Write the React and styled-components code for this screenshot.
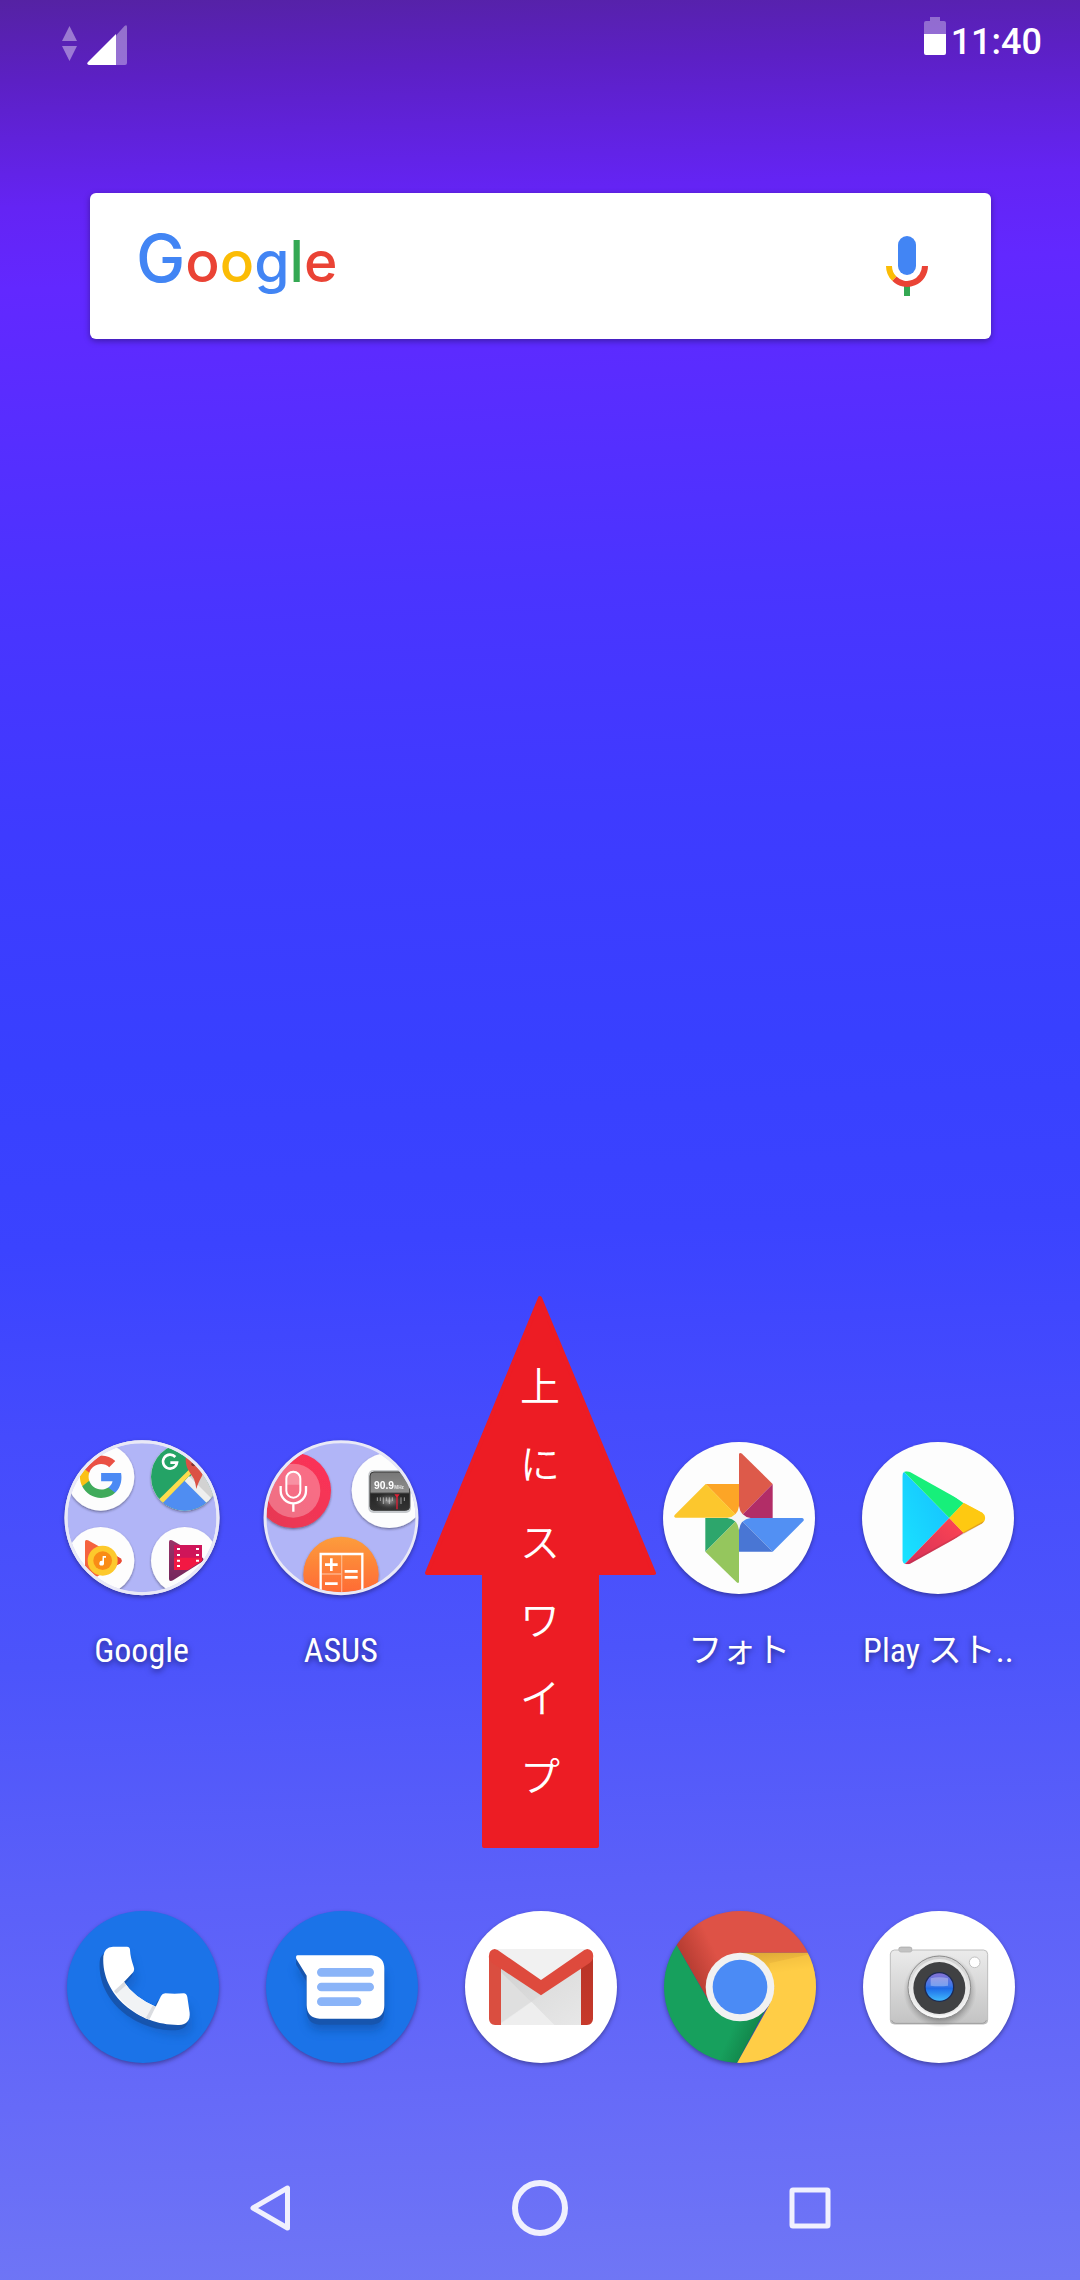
import React from "react";
import styled, { createGlobalStyle } from "styled-components";

const GlobalStyle = createGlobalStyle`
  *, *::before, *::after { box-sizing: border-box; }
  body {
    margin: 0;
    font-family: Roboto, "Noto Sans CJK JP", sans-serif;
    color: #fff;
  }
`;

const Screen = styled.main`
  display: flex;
  flex-direction: column;
  min-height: 100vh;
  background: linear-gradient(
    178deg,
    #5522a3 0%,
    #5c20c4 3.5%,
    #6022da 6%,
    #6424f4 9%,
    #6228ff 12.5%,
    #582dff 18%,
    #4a34ff 26%,
    #3e3bff 36%,
    #3840ff 46%,
    #3b43ff 54%,
    #454bfd 62%,
    #4c54fb 72%,
    #5b60f9 82%,
    #666af8 91%,
    #7077f5 100%
  );
`;

const StatusBar = styled.header`
  display: flex;
  align-items: flex-start;
  justify-content: space-between;
  height: 72px;
  padding: 17px 38px 0 62px;
`;

const StatusGroup = styled.div`
  display: flex;
  align-items: flex-start;
  gap: ${(p) => p.$gap}px;
  padding-top: ${(p) => p.$top || 0}px;
`;

const Clock = styled.time`
  font-size: 36px;
  font-weight: 500;
  line-height: 50px;
`;

const SearchBar = styled.section`
  display: flex;
  align-items: center;
  justify-content: space-between;
  height: 146px;
  margin: 121px 89px 0 90px;
  padding: 0 55px 0 46px;
  border-radius: 6px;
  background: #fff;
  box-shadow: 0 2px 6px rgba(0, 0, 0, 0.35);
`;

const PlainButton = styled.button`
  display: flex;
  align-items: center;
  justify-content: center;
  padding: 0;
  border: 0;
  background: none;
  color: inherit;
  font: inherit;
  cursor: pointer;
`;

const LogoButton = styled(PlainButton)`
  align-items: baseline;
  padding-bottom: 12px;
  font-family: Inter, sans-serif;
  font-weight: 500;
  line-height: 72px;
`;

const Letter = styled.span`
  color: ${(p) => p.$color};
  font-size: ${(p) => (p.$capital ? 66 : 57)}px;
`;

const MicButton = styled(PlainButton)`
  width: 58px;
  height: 72px;
`;

const IconGrid = styled.section`
  display: grid;
  grid-template-columns: repeat(5, 1fr);
  padding: 0 41px 0 43px;
`;

const HomeRow = styled(IconGrid)`
  margin-top: auto;
  padding: 0 42px;
`;

const Dock = styled(IconGrid)`
  margin: 237px 0 73px;
`;

const AppButton = styled(PlainButton)`
  flex-direction: column;
  justify-content: flex-start;
  gap: 31px;
`;

const IconBox = styled.span`
  display: flex;
  align-items: center;
  justify-content: center;
  height: ${(p) => (p.$dock ? 152 : 155)}px;

  svg {
    overflow: visible;
    filter: drop-shadow(0 2px 2px rgba(20, 20, 60, 0.45));
  }
`;

const Label = styled.span`
  font-family: "Roboto Condensed", "Liberation Sans Narrow", Roboto, "Noto Sans CJK JP", sans-serif;
  font-size: 34px;
  line-height: 48px;
  white-space: nowrap;
  text-shadow: 0 2px 6px rgba(0, 0, 40, 0.6);
`;

const ArrowSlot = styled.div`
  position: relative;
`;

const SwipeHint = styled.div`
  position: absolute;
  top: -145px;
  left: 50%;
  width: 232px;
  height: 554px;
  padding-top: 50px;
  transform: translateX(-50%);
  display: flex;
  justify-content: center;
`;

const ArrowShape = styled.svg`
  position: absolute;
  inset: 0;
`;

const HintText = styled.p`
  position: relative;
  width: 40px;
  margin: 0;
  font-family: "Noto Sans CJK JP", sans-serif;
  font-size: 40px;
  font-weight: 350;
  line-height: 78px;
  text-align: center;
  word-break: break-all;
  line-break: anywhere;
`;

const NavBar = styled.nav`
  display: grid;
  grid-template-columns: repeat(3, 1fr);
  height: 144px;
  padding: 0 12.5%;
`;

function SignalIcon() {
  return (
    <svg width="66" height="40" viewBox="0 0 66 40" aria-label="電波">
      <path d="M0 16 7.500 1 15 16ZM0 21h15L7.500 36Z" fill="#fff" opacity=".4" />
      <path d="M54 10.500 62.500 1Q65 -1 65 2V38Q65 40 63 40H54Z" fill="#fff" opacity=".36" />
      <path d="M54 9V40H27Q24 39 26 37Z" fill="#fff" />
    </svg>
  );
}

function BatteryIcon() {
  return (
    <svg width="22" height="38" viewBox="0 0 22 38" aria-label="電池">
      <path d="M6 0H16V4H20Q22 4 22 6V17H0V6Q0 4 2 4H6Z" fill="#fff" opacity=".34" />
      <path d="M0 17H22V36Q22 38 20 38H2Q0 38 0 36Z" fill="#fff" />
    </svg>
  );
}

function MicIcon() {
  return (
    <svg width="42" height="60" viewBox="0 0 42 60" aria-hidden="true">
      <rect x="12" y="0" width="18" height="39" rx="9" fill="#4285f4" />
      <path d="M18 50h6v10h-6z" fill="#34a853" />
      <path d="M39 30A18 18 0 0 1 8.300 42.700" fill="none" stroke="#ea4335" strokeWidth="6" />
      <path d="M3 30A18 18 0 0 0 8.300 42.700" fill="none" stroke="#fbbc05" strokeWidth="6" />
    </svg>
  );
}

function GoogleFolder() {
  return (
    <svg width="156" height="156" viewBox="72 57 468 468" aria-hidden="true">
      <defs>
        <clipPath id="gFolder"><circle cx="306" cy="290" r="224" /></clipPath>
        <clipPath id="gMaps"><circle cx="434" cy="168" r="101" /></clipPath>
        <linearGradient id="gPlum" x1="0" y1="0" x2="0" y2="1">
          <stop offset="0" stopColor="#9a3468" /><stop offset="1" stopColor="#74265c" />
        </linearGradient>
        <filter id="gShade" x="-10%" y="-10%" width="120%" height="125%">
          <feDropShadow dx="0" dy="4" stdDeviation="3" floodColor="#223" floodOpacity=".5" />
        </filter>
      </defs>
      <circle cx="306" cy="290" r="228" fill="#b1b5f7" stroke="#e9e9f7" strokeWidth="9" />
      <g clipPath="url(#gFolder)">
        <g fill="#fdfdfd" filter="url(#gShade)">
          <circle cx="182" cy="168" r="101" />
          <circle cx="434" cy="168" r="101" />
          <circle cx="182" cy="419" r="101" />
          <circle cx="434" cy="419" r="101" />
        </g>
        <g transform="translate(114 98) scale(5.780)">
          <path fill="#4b8af4" d="M22.560 12.250c0-.780-.070-1.530-.200-2.250H12v4.260h5.920c-.260 1.370-1.040 2.530-2.210 3.310v2.770h3.570c2.080-1.920 3.280-4.740 3.280-8.090z" />
          <path fill="#40ab5b" d="M12 23c2.970 0 5.460-.980 7.280-2.660l-3.570-2.770c-.980.660-2.230 1.060-3.710 1.060-2.860 0-5.290-1.930-6.160-4.530H2.180v2.840C3.990 20.530 7.700 23 12 23z" />
          <path fill="#fbc116" d="M5.840 14.090c-.220-.660-.350-1.360-.350-2.090s.130-1.430.350-2.090V7.070H2.180C1.430 8.550 1 10.220 1 12s.430 3.450 1.180 4.930l3.660-2.840z" />
          <path fill="#ea5044" d="M12 5.380c1.620 0 3.060.560 4.210 1.640l3.150-3.150C17.450 2.090 14.970 1 12 1 7.700 1 3.990 3.470 2.180 7.070l3.660 2.840c.870-2.600 3.300-4.530 6.160-4.530z" />
        </g>
        <g clipPath="url(#gMaps)">
          <path d="M333 67H535V269H333Z" fill="#24a366" />
          <path d="M434 182 535 83V269Z" fill="#d2d2d2" />
          <path d="M434 178 530 274H338Z" fill="#4f8df2" />
          <path d="M447 165 540 258 520 266 434 180Z" fill="#efefef" />
          <path d="M340 252 455 138 458 154 356 259 340 272Z" fill="#fddc4d" />
          <path d="M437 112Q436 136 449 154L462 174Q467 188 469 204Q473 188 486 165L491 150 460 103Z" fill="#db5145" />
          <circle cx="460" cy="130" r="6" fill="#84332e" />
          <path d="M406 108A21 21 0 1 0 411 125H391" fill="none" stroke="#fff" strokeWidth="8" />
        </g>
        <path d="M135 362Q135 354 144 358L241 412Q249 419 241 427L173 466Q168 468 164 463L135 440Z" fill="#f5633f" />
        <path d="M215 397 241 412Q249 419 241 427L217 440Z" fill="#e84b35" />
        <circle cx="188" cy="419" r="45" fill="#fdc92c" />
        <circle cx="188" cy="419" r="28" fill="#f98c16" />
        <path d="M188 405H198V410H192V426A7 7 0 1 1 187 420Z" fill="#fff" />
        <path d="M387 363Q387 354 396 358L489 411Q493 416 489 421L399 478Q387 483 387 474Z" fill="url(#gPlum)" />
        <path d="M402 372H486V411H402Z" fill="#cf1559" />
        <path d="M402 410H486V420L444 447H402Z" fill="#f21843" />
        <path d="M411 381h9v6h-9zM411 399h9v6h-9zM411 416h9v6h-9zM411 432h9v6h-9zM468 381h9v6h-9zM468 399h9v6h-9zM468 416h9v6h-9z" fill="#fff" />
      </g>
      <circle cx="306" cy="290" r="228" fill="none" stroke="#e9e9f7" strokeWidth="9" />
    </svg>
  );
}

function AsusFolder() {
  return (
    <svg width="156" height="156" viewBox="70 57 468 468" aria-hidden="true">
      <defs>
        <clipPath id="aFolder"><circle cx="304" cy="290" r="224" /></clipPath>
        <linearGradient id="aRed" x1="0" y1="1" x2="1" y2="0">
          <stop offset="0" stopColor="#e33b52" /><stop offset="1" stopColor="#ff3159" />
        </linearGradient>
        <linearGradient id="aOrange" x1="0" y1="0" x2="0" y2="1">
          <stop offset="0" stopColor="#fc9d3c" /><stop offset=".75" stopColor="#ff6a35" />
        </linearGradient>
        <linearGradient id="aMetal" x1="0" y1="0" x2="0" y2="1">
          <stop offset="0" stopColor="#777" /><stop offset=".52" stopColor="#8d8d8d" />
          <stop offset=".57" stopColor="#262626" /><stop offset="1" stopColor="#333" />
        </linearGradient>
        <radialGradient id="aDial">
          <stop offset="0" stopColor="#aaa" /><stop offset="1" stopColor="#333" stopOpacity="0" />
        </radialGradient>
        <filter id="aShade" x="-10%" y="-10%" width="120%" height="125%">
          <feDropShadow dx="0" dy="4" stdDeviation="3" floodColor="#223" floodOpacity=".5" />
        </filter>
      </defs>
      <circle cx="304" cy="290" r="228" fill="#b1b5f7" />
      <g clipPath="url(#aFolder)">
        <g filter="url(#aShade)">
          <circle cx="161" cy="208" r="113" fill="url(#aRed)" />
          <circle cx="449" cy="208" r="113" fill="#fdfdfd" />
          <circle cx="304" cy="460" r="113" fill="url(#aOrange)" />
        </g>
        <circle cx="161" cy="209" r="81" fill="#fff" opacity=".28" />
        <path d="M139 191V171A22 22 0 0 1 183 171V191Z" fill="#fff" opacity=".25" />
        <g fill="none" stroke="#fff" strokeWidth="6">
          <rect x="140" y="152" width="42" height="78" rx="21" />
          <path d="M123 195V209A38 38 0 0 0 199 209V195M161 247V272" strokeWidth="7" />
        </g>
        <rect x="386" y="147" width="128" height="129" rx="15" fill="#c6c9cc" />
        <rect x="391" y="153" width="119" height="115" rx="12" fill="url(#aMetal)" stroke="#3a3a3a" strokeWidth="3" />
        <ellipse cx="448" cy="240" rx="46" ry="27" fill="url(#aDial)" />
        <path d="M413 229V240M422 229V240M431 229V249M440 229V240M449 229V249M458 229V240M484 229V249M494 229V240" stroke="#d6d6d6" strokeWidth="2" />
        <path d="M464 220H480L474 228V265H470V228Z" fill="#e01f37" />
        <text x="403" y="204" fill="#fff" fontFamily="Liberation Sans, sans-serif" fontWeight="700" fontSize="31">90.9</text>
        <text x="464" y="204" fill="#e6e6e6" fontFamily="Liberation Sans, sans-serif" fontWeight="700" fontSize="14">MHz</text>
        <g fill="none" stroke="#fff">
          <path d="M243 540V399H368V540" strokeWidth="7" />
          <path d="M306 402V540M246 459H306" strokeWidth="4" opacity=".4" />
          <path d="M256 431H294M275 412V450M256 488H294M315 451H354M315 469H354" strokeWidth="8" />
        </g>
      </g>
      <circle cx="304" cy="290" r="228" fill="none" stroke="#e9e9f7" strokeWidth="9" />
    </svg>
  );
}

function PhotosIcon() {
  return (
    <svg width="152" height="152" viewBox="72 66 456 456" aria-hidden="true">
      <circle cx="300" cy="294" r="228" fill="#fdfdfd" />
      <path d="M300 192V294L200 192Z" fill="#fda526" />
      <path d="M200 192 300 293H110Q103 291 107 285Z" fill="#fcc72d" />
      <path d="M300 294V102Q302 97 309 101L401 192Z" fill="#dd5a4a" />
      <path d="M401 192V294H300Z" fill="#b22d67" />
      <path d="M300 294H490Q497 297 493 303L401 395Z" fill="#5290f3" />
      <path d="M300 294 401 395H300Z" fill="#4976d4" />
      <path d="M199 294H300L199 395Z" fill="#2da66c" />
      <path d="M300 294V486Q298 491 293 487L199 395Z" fill="#95c65d" />
      <path d="M300 258Q304 289 335 294Q304 298 300 330Q296 298 265 294Q296 289 300 258Z" fill="#f4f4f4" />
    </svg>
  );
}

function PlayIcon() {
  return (
    <svg width="152" height="152" viewBox="669 66 456 456" aria-hidden="true">
      <defs>
        <clipPath id="playShape">
          <path d="M790 168Q791 149 813 156L1029 277Q1049 294 1029 311L813 431Q793 437 790 421Z" />
        </clipPath>
        <linearGradient id="playBlue" x1="1" y1="0" x2="0" y2="1">
          <stop offset="0" stopColor="#16bdff" /><stop offset="1" stopColor="#1ae6ff" />
        </linearGradient>
        <linearGradient id="playRed" x1="1" y1="0" x2="0" y2="1">
          <stop offset="0" stopColor="#ff4653" /><stop offset="1" stopColor="#cf2c59" />
        </linearGradient>
      </defs>
      <circle cx="897" cy="294" r="228" fill="#fdfdfd" />
      <g clipPath="url(#playShape)">
        <path d="M780 140V450L931 294Z" fill="url(#playBlue)" />
        <path d="M780 140 931 294 974 250 810 130Z" fill="#17ef7a" />
        <path d="M780 450 931 294 974 338 810 455Z" fill="url(#playRed)" />
        <path d="M974 248 1060 294 974 340 931 294Z" fill="#fec911" />
        <path d="M800 437 1035 307" stroke="#8b3044" strokeOpacity=".25" strokeWidth="8" />
      </g>
    </svg>
  );
}

function PhoneIcon() {
  const handset =
    "M218 170H260Q269 171 269 180Q270 202 280 230Q284 240 277 248L251 276Q281 322 346 350L362 318Q366 310 375 310Q403 312 430 310Q439 311 441 321L448 368Q451 402 416 405C300 407 182 320 189 199Q191 172 218 170Z";
  return (
    <svg width="152" height="152" viewBox="80 63 456 456" aria-hidden="true">
      <defs>
        <filter id="phoneBlur" x="-20%" y="-20%" width="150%" height="150%">
          <feGaussianBlur stdDeviation="14" />
        </filter>
      </defs>
      <circle cx="308" cy="291" r="228" fill="#1b73e8" />
      <path d={handset} fill="#0d4a9c" opacity=".35" transform="translate(8 32)" filter="url(#phoneBlur)" />
      <path d={handset} fill="#1755ae" transform="translate(-11 16)" />
      <path d={handset} fill="#1755ae" transform="translate(-5 14)" />
      <path d={handset} fill="#fff" />
      <path d="M251 276Q281 322 346 350L319 387Q259 357 221 304Z" fill="#f1f3f5" />
      <path d="M251 276 257 286 228 311 221 303ZM337 347 346 350 327 389 316 385Z" fill="#dadce0" />
    </svg>
  );
}

function MessagesIcon() {
  const bubble = "M772 196H994Q1032 199 1032 237V346Q1032 384 994 386H838Q800 384 799 346V257L768 207Q765 197 772 196Z";
  return (
    <svg width="152" height="152" viewBox="677 63 456 456" aria-hidden="true">
      <defs>
        <filter id="msgBlur" x="-20%" y="-20%" width="150%" height="150%">
          <feGaussianBlur stdDeviation="14" />
        </filter>
      </defs>
      <circle cx="905" cy="291" r="228" fill="#1b73e8" />
      <path d={bubble} fill="#0d4a9c" opacity=".5" transform="translate(2 36)" filter="url(#msgBlur)" />
      <path d={bubble} fill="#1755ae" transform="translate(0 18)" />
      <path d={bubble} fill="#1755ae" transform="translate(0 9)" />
      <path d={bubble} fill="#fff" />
      <path d="M843 247H988M843 291H988M843 335H950" stroke="#8ab4f8" strokeWidth="26" strokeLinecap="round" />
    </svg>
  );
}

function GmailIcon() {
  return (
    <svg width="152" height="152" viewBox="75 63 456 456" aria-hidden="true">
      <defs>
        <linearGradient id="gmRight" x1="0" y1="0" x2="0" y2="1">
          <stop offset="0" stopColor="#b83427" /><stop offset="1" stopColor="#c7392b" />
        </linearGradient>
        <linearGradient id="gmShade" x1="0" y1="0" x2="1" y2="1">
          <stop offset="0" stopColor="#c8c8c8" /><stop offset="1" stopColor="#e6e6e6" />
        </linearGradient>
      </defs>
      <circle cx="303" cy="291" r="228" fill="#fff" />
      <path d="M163 177H442L424 405H182Z" fill="#e9e9e9" />
      <path d="M163 177H442L303 272Z" fill="#f1f1f1" />
      <path d="M182 232 303 315 182 399Z" fill="#dfdfdf" />
      <path d="M182 232 303 315 424 232V405H343L182 245Z" fill="url(#gmShade)" opacity=".55" />
      <path d="M182 402 275 336 343 405H182Z" fill="#eee" />
      <path d="M147 200 183 232V405H165Q148 404 147 387Z" fill="#da4e40" />
      <path d="M459 200 423 232V405H441Q458 404 459 387Z" fill="url(#gmRight)" />
      <path d="M147 205Q144 180 164 177L173 180 303 270 433 180 442 177Q463 180 459 205Q458 212 449 219L303 316 157 219Q147 211 147 205Z" fill="#de4a3d" />
    </svg>
  );
}

function ChromeIcon() {
  return (
    <svg width="152" height="152" viewBox="72 63 456 456" aria-hidden="true">
      <defs>
        <clipPath id="chromeDisc"><circle cx="300" cy="291" r="228" /></clipPath>
        <linearGradient id="crRed" gradientUnits="userSpaceOnUse" x1="140" y1="250" x2="235" y2="205">
          <stop offset="0" stopColor="#b23a30" /><stop offset="1" stopColor="#de5246" />
        </linearGradient>
        <linearGradient id="crGreen" gradientUnits="userSpaceOnUse" x1="365" y1="460" x2="275" y2="420">
          <stop offset="0" stopColor="#107a42" /><stop offset="1" stopColor="#17a05d" />
        </linearGradient>
        <linearGradient id="crGold" gradientUnits="userSpaceOnUse" x1="400" y1="187" x2="408" y2="250">
          <stop offset="0" stopColor="#e0ab38" /><stop offset="1" stopColor="#ffcd46" />
        </linearGradient>
      </defs>
      <g clipPath="url(#chromeDisc)">
        <path d="M72 63H528V188H300L208 335 110 166Z" fill="url(#crRed)" />
        <path d="M110 166 210 340 300 291 380 352 288 525H60V100Z" fill="url(#crGreen)" />
        <path d="M300 188H540V525H288L388 345 403 291Z" fill="url(#crGold)" />
        <path d="M388 220 528 188V300H400Z" fill="#ffcd46" opacity=".5" />
      </g>
      <circle cx="300" cy="291" r="103" fill="#f1f1f1" />
      <circle cx="300" cy="291" r="82" fill="#4b8bf5" />
    </svg>
  );
}

function CameraIcon() {
  return (
    <svg width="152" height="152" viewBox="669 63 456 456" aria-hidden="true">
      <defs>
        <linearGradient id="camBody" x1="0" y1="0" x2="0" y2="1">
          <stop offset="0" stopColor="#ebebeb" /><stop offset="1" stopColor="#c3c3c3" />
        </linearGradient>
        <linearGradient id="camRing" x1="0" y1="0" x2="0" y2="1">
          <stop offset="0" stopColor="#cfcfcf" /><stop offset="1" stopColor="#fafafa" />
        </linearGradient>
        <linearGradient id="camLens" x1="0" y1="0" x2="0" y2="1">
          <stop offset="0" stopColor="#8673d6" /><stop offset=".45" stopColor="#3f77e8" />
          <stop offset=".55" stopColor="#1f6be8" /><stop offset="1" stopColor="#3fb8fb" />
        </linearGradient>
        <radialGradient id="camShadow">
          <stop offset=".75" stopColor="#555" stopOpacity=".55" /><stop offset="1" stopColor="#888" stopOpacity="0" />
        </radialGradient>
      </defs>
      <circle cx="897" cy="291" r="228" fill="#fff" />
      <rect x="776" y="171" width="40" height="16" rx="7" fill="#c2c2c2" stroke="#a2a2a2" strokeWidth="2" />
      <path d="M763 180H775L781 186H812L818 180H1031Q1043 181 1043 193V390Q1043 402 1031 402H763Q751 402 751 390V192Q752 181 763 180Z" fill="url(#camBody)" stroke="#bdbdbd" strokeWidth="3" />
      <path d="M755 391Q757 400 767 400H1028Q1037 399 1039 391" fill="none" stroke="#9e9e9e" strokeWidth="3" />
      <circle cx="900" cy="302" r="110" fill="url(#camShadow)" />
      <circle cx="898" cy="292" r="94" fill="url(#camRing)" stroke="#8d8d8d" strokeWidth="3" />
      <circle cx="898" cy="292" r="85" fill="#e9e9e9" />
      <circle cx="898" cy="294" r="78" fill="#404143" />
      <circle cx="898" cy="291" r="45" fill="#1c2a55" />
      <circle cx="898" cy="291" r="41" fill="url(#camLens)" />
      <path d="M872 265Q897 258 924 265V287Q897 291 872 287Z" fill="#fff" opacity=".3" />
      <circle cx="1004" cy="217" r="16" fill="#fff" stroke="#c2c2c2" strokeWidth="3" />
    </svg>
  );
}

const wordmark = [
  ["G", "#4285f4"],
  ["o", "#ea4335"],
  ["o", "#fbbc05"],
  ["g", "#4285f4"],
  ["l", "#34a853"],
  ["e", "#ea4335"],
];

function AppIcon({ icon, label, name, dock }) {
  return (
    <AppButton type="button" aria-label={name}>
      <IconBox $dock={dock}>{icon}</IconBox>
      {label && <Label>{label}</Label>}
    </AppButton>
  );
}

export default function App() {
  return (
    <>
      <GlobalStyle />
      <Screen>
        <StatusBar>
          <StatusGroup $gap={0} $top={8}>
            <SignalIcon />
          </StatusGroup>
          <StatusGroup $gap={5}>
            <BatteryIcon />
            <Clock>11:40</Clock>
          </StatusGroup>
        </StatusBar>

        <SearchBar>
          <LogoButton type="button">
            {wordmark.map(([char, color], i) => (
              <Letter key={i} $color={color} $capital={i === 0}>{char}</Letter>
            ))}
          </LogoButton>
          <MicButton type="button" aria-label="音声検索">
            <MicIcon />
          </MicButton>
        </SearchBar>

        <HomeRow>
          <AppIcon icon={<GoogleFolder />} label="Google" />
          <AppIcon icon={<AsusFolder />} label="ASUS" />
          <ArrowSlot>
            <SwipeHint>
              <ArrowShape width="232" height="554" viewBox="0 0 232 554" aria-hidden="true">
                <path
                  d="M116 3 230 278H173V551H60V278H3Z"
                  fill="#ed1c24"
                  stroke="#ed1c24"
                  strokeWidth="4"
                  strokeLinejoin="round"
                />
              </ArrowShape>
              <HintText>上にスワイプ</HintText>
            </SwipeHint>
          </ArrowSlot>
          <AppIcon icon={<PhotosIcon />} label="フォト" />
          <AppIcon icon={<PlayIcon />} label="Play スト.." />
        </HomeRow>

        <Dock>
          <AppIcon dock icon={<PhoneIcon />} name="電話" />
          <AppIcon dock icon={<MessagesIcon />} name="メッセージ" />
          <AppIcon dock icon={<GmailIcon />} name="Gmail" />
          <AppIcon dock icon={<ChromeIcon />} name="Chrome" />
          <AppIcon dock icon={<CameraIcon />} name="カメラ" />
        </Dock>

        <NavBar>
          <PlainButton type="button" aria-label="戻る">
            <svg width="40" height="46" viewBox="0 0 40 46" aria-hidden="true">
              <path d="M37.500 3V43L3 23Z" fill="none" stroke="#f0f0fe" strokeWidth="5" strokeLinejoin="round" />
            </svg>
          </PlainButton>
          <PlainButton type="button" aria-label="ホーム">
            <svg width="56" height="56" viewBox="0 0 56 56" aria-hidden="true">
              <circle cx="28" cy="28" r="25" fill="none" stroke="#f0f0fe" strokeWidth="6" />
            </svg>
          </PlainButton>
          <PlainButton type="button" aria-label="履歴">
            <svg width="42" height="42" viewBox="0 0 42 42" aria-hidden="true">
              <rect x="3" y="3" width="36" height="36" rx="1" fill="none" stroke="#f0f0fe" strokeWidth="5" strokeLinejoin="round" />
            </svg>
          </PlainButton>
        </NavBar>
      </Screen>
    </>
  );
}
